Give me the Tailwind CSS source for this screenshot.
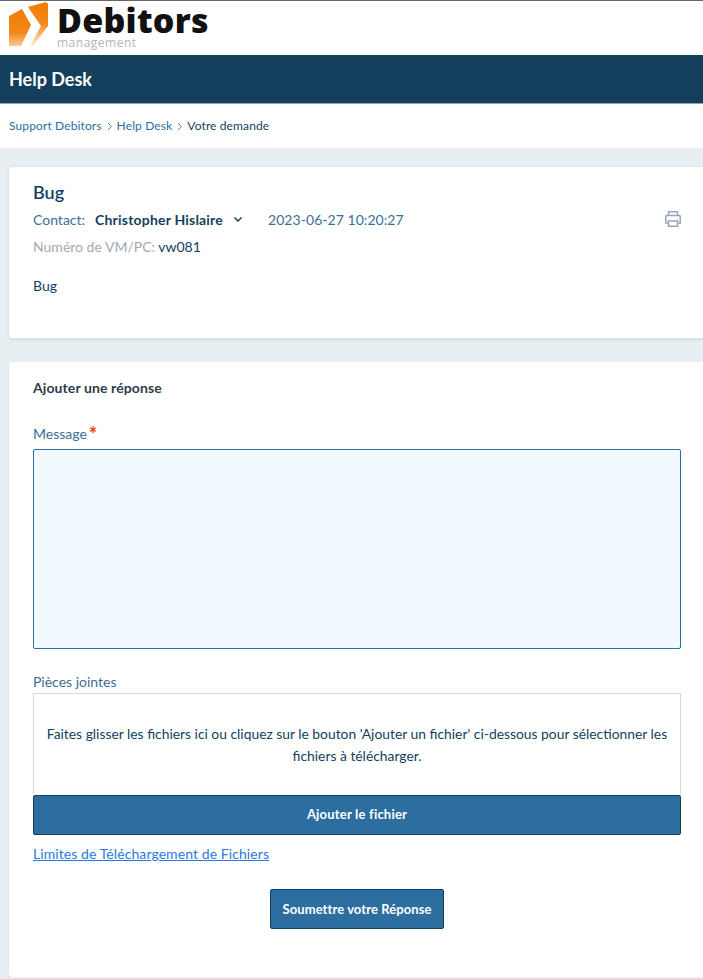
<!DOCTYPE html>
<html lang="fr">
<head>
    <meta charset="UTF-8" />
    <meta name="viewport" content="width=device-width, initial-scale=1.0" />
    <title>Help Desk</title>
    <script src="https://cdn.jsdelivr.net/npm/@tailwindcss/browser@4"></script>
</head>

<body class="bg-[#e8eff2] font-['Lato',sans-serif] text-[14px] text-[#133f5c]">
    <!-- Logo -->
    <div class="h-[55px] bg-white border-t border-[#666] flex items-start pl-[9px]">
        <svg class="mt-px shrink-0" width="40" height="46" viewBox="9 2 40 46">
            <defs>
                <linearGradient id="g" x1="0" y1="0" x2="0" y2="1">
                    <stop offset="0" stop-color="#f07c00" />
                    <stop offset="0.65" stop-color="#f28a1c" />
                    <stop offset="1" stop-color="#f9c998" />
                </linearGradient>
                <linearGradient id="h" x1="0" y1="0" x2="0" y2="1">
                    <stop offset="0" stop-color="#f07c00" />
                    <stop offset="0.5" stop-color="#f28a1c" />
                    <stop offset="1" stop-color="#fdeede" />
                </linearGradient>
            </defs>
            <polygon points="9,16 22,9 31,25 21,46 9,46" fill="url(#g)" />
            <polygon points="28,7 46,2 48,4 48,26 33,46 30,46 41,26" fill="url(#h)" />
        </svg>
        <div class="ml-[8px]">
            <div class="font-['Open_Sans',sans-serif] font-extrabold text-[34px] leading-[40px] h-[37px] text-[#111] -mt-[1px] tracking-[0.25px]">Debitors</div>
            <div class="font-['Open_Sans',sans-serif] text-[12px] leading-[12px] text-[#b5b5b5] tracking-[0.5px]">management</div>
        </div>
    </div>

    <!-- Titre -->
    <header class="h-[49px] bg-[#133f5c] border-b border-[#8fa3b3] flex items-center pl-[9px]">
        <h1 class="text-[18px] font-bold text-white">Help Desk</h1>
    </header>

    <!-- Fil d'Ariane -->
    <nav class="h-[44px] bg-white flex items-center pl-[9px] text-[12px] tracking-[0.12px] text-[#2c6e9f]">
        <a href="#">Support Debitors</a>
        <svg class="mx-[3px]" width="9" height="9" viewBox="0 0 9 9" fill="none" stroke="#6b7f8f"><path d="M3 1l3.5 3.5L3 8" /></svg>
        <a href="#">Help Desk</a>
        <svg class="mx-[3px]" width="9" height="9" viewBox="0 0 9 9" fill="none" stroke="#6b7f8f"><path d="M3 1l3.5 3.5L3 8" /></svg>
        <span class="text-[#133f5c] -mt-px">Votre demande</span>
    </nav>

    <main class="pl-[9px] pt-[19px]">
        <!-- Demande -->
        <section class="h-[171px] bg-white rounded-tl-[3px] rounded-bl-[3px] shadow-[0_1px_4px_rgba(19,63,92,0.15)] pl-[24px] pr-[22px] pt-[13px]">
            <h2 class="text-[18px] leading-[24px] font-semibold">Bug</h2>
            <div class="flex items-center mt-[5px] h-[20px]">
                <span class="text-[#3a6f96]">Contact:</span>
                <span class="ml-[10px] font-bold tracking-[0.2px]">Christopher Hislaire</span>
                <svg class="ml-[10px]" width="10" height="10" viewBox="0 0 10 10" fill="none" stroke="#133f5c" stroke-width="1.5"><path d="M1.5 3.5L5 7l3.5-3.5" /></svg>
                <span class="ml-[25px] tracking-[0.05px] text-[#3a6f96]">2023-06-27 10:20:27</span>
                <svg class="ml-auto" width="16" height="16" viewBox="0 0 16 16" fill="none" stroke="#9aa5b8" stroke-width="1.5">
                    <path d="M3.5 4.5V.8h9v3.7M3.5 12H.8V5.2a.7.7 0 0 1 .7-.7h13a.7.7 0 0 1 .7.7V12h-2.7M3.5 10h9v5.2h-9z" />
                    <circle cx="12.5" cy="7" r="0.6" fill="#9aa5b8" stroke="none" />
                </svg>
            </div>
            <div class="mt-[8px] h-[20px] leading-[20px]"><span class="text-[#a3a9b5]">Numéro de VM/PC:</span> vw081</div>
            <p class="mt-[19px] leading-[20px]">Bug</p>
        </section>

        <!-- Réponse -->
        <section class="mt-[24px] h-[615px] bg-white rounded-tl-[3px] rounded-bl-[3px] shadow-[0_1px_2px_rgba(19,63,92,0.12)] pl-[24px] pr-[22px] pt-[16px]">
            <h3 class="text-[14px] leading-[20px] font-bold tracking-[0.1px] text-[#2d3c4a]">Ajouter une réponse</h3>

            <label class="block mt-[26px] h-[26px] leading-[20px] text-[#3a6f96]">Message<sup class="text-[#f0440f] text-[20px] font-bold ml-[2px] top-[3px]">*</sup></label>
            <textarea class="block w-full h-[200px] mt-[-1px] bg-[#f2f9ff] border border-[#2c6e9f] rounded-[2px] resize-none"></textarea>

            <div class="mt-[23px] h-[21px] leading-[20px] text-[#3a6f96]">Pièces jointes</div>
            <div class="h-[102px] border border-[#d6d6e4] border-b-0 flex items-center justify-center px-[8px] text-center text-[13.85px] leading-[22px]">
                <p>Faites glisser les fichiers ici ou cliquez sur le bouton 'Ajouter un fichier' ci-dessous pour sélectionner les fichiers à télécharger.</p>
            </div>
            <button class="block w-full h-[40px] bg-[#2c6e9f] border border-[#133f5c] rounded-[2px] text-[13px] font-bold tracking-[0.2px] text-white">Ajouter le fichier</button>

            <a href="#" class="block mt-[9px] leading-[20px] tracking-[0.08px] text-[#2a7ae2] underline">Limites de Téléchargement de Fichiers</a>

            <div class="flex justify-center mt-[25px]">
                <button class="h-[40px] w-[174px] pt-px bg-[#2c6e9f] border border-[#133f5c] rounded-[2px] text-[13px] font-bold tracking-[0.08px] text-white">Soumettre votre Réponse</button>
            </div>
        </section>
    </main>
</body>

</html>
